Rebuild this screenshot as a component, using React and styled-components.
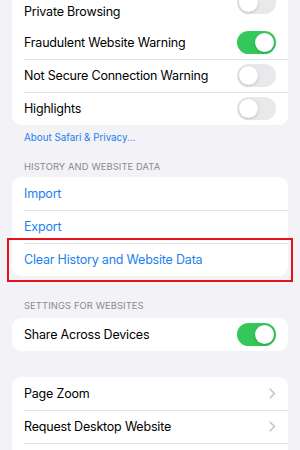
import React from "react";
import styled, { createGlobalStyle } from "styled-components";

const GlobalStyle = createGlobalStyle`
  html, body {
    margin: 0;
    padding: 0;
    background: #f2f2f7;
    overflow: hidden;
  }
  body {
    font-family: Inter, "Liberation Sans", sans-serif;
    -webkit-font-smoothing: antialiased;
  }
`;

const Page = styled.div`
  width: 300px;
  height: 450px;
  overflow: hidden;
  background: #f2f2f7;
`;

const Scroller = styled.div`
  margin-top: -26px;
  padding: 0 12px;
  display: flex;
  flex-direction: column;
`;

const Card = styled.div`
  background: #fff;
  border-radius: 9px;
  margin-top: ${(props) => props.gap || 0}px;
`;

const Row = styled.div`
  position: relative;
  display: flex;
  align-items: center;
  justify-content: space-between;
  min-height: 33px;
  padding: ${(props) => (props.tall ? "8px 12px 4px" : "0 12px")};
  box-sizing: border-box;

  & + &::before {
    content: "";
    position: absolute;
    top: 0;
    left: 12px;
    right: 0;
    height: 1px;
    background: #e3e3e8;
  }
`;

const Label = styled.span`
  font-size: 12.5px;
  line-height: 20px;
  letter-spacing: -0.2px;
  color: ${(props) => (props.link ? "#1a7ff0" : "#000")};
`;

const Switch = styled.div`
  position: relative;
  flex: none;
  align-self: center;
  width: 39px;
  height: 23px;
  border-radius: 12px;
  background: ${(props) => (props.on ? "#34c759" : "#e9e9eb")};

  &::after {
    content: "";
    position: absolute;
    top: 2px;
    left: ${(props) => (props.on ? "18px" : "2px")};
    width: 19px;
    height: 19px;
    border-radius: 50%;
    background: #fff;
    box-shadow: 0 1px 3px rgba(0, 0, 0, 0.18), 0 0 1px rgba(0, 0, 0, 0.08);
  }
`;

const FooterLink = styled.div`
  padding: 6px 12px 0;
  font-size: 9.8px;
  line-height: 14px;
  color: #1a7ff0;
`;

const SectionHeader = styled.div`
  padding: ${(props) => props.top || 0}px 12px 0;
  font-size: 9.4px;
  line-height: 14px;
  letter-spacing: 0.1px;
  color: #8a8a8e;
  text-transform: uppercase;
`;

const Highlight = styled.div`
  position: absolute;
  top: -5px;
  left: -5px;
  right: -5px;
  bottom: -6px;
  border: 2px solid #e3121b;
  pointer-events: none;
`;

const Chevron = () => (
  <svg width="7" height="11" viewBox="0 0 7 11" fill="none">
    <path
      d="M1.2 1.2L5.5 5.5L1.2 9.8"
      stroke="#c4c4c8"
      strokeWidth="1.6"
      strokeLinecap="round"
      strokeLinejoin="round"
    />
  </svg>
);

export default function App() {
  return (
    <Page>
      <GlobalStyle />
      <Scroller>
        <Card>
          <Row tall>
            <Label>
              Require Face ID to Unlock
              <br />
              Private Browsing
            </Label>
            <Switch />
          </Row>
          <Row>
            <Label>Fraudulent Website Warning</Label>
            <Switch on />
          </Row>
          <Row>
            <Label>Not Secure Connection Warning</Label>
            <Switch />
          </Row>
          <Row>
            <Label>Highlights</Label>
            <Switch />
          </Row>
        </Card>
        <FooterLink>About Safari &amp; Privacy...</FooterLink>

        <SectionHeader top={15}>History and Website Data</SectionHeader>
        <Card gap={3}>
          <Row>
            <Label link>Import</Label>
          </Row>
          <Row>
            <Label link>Export</Label>
          </Row>
          <Row>
            <Label link>Clear History and Website Data</Label>
            <Highlight />
          </Row>
        </Card>

        <SectionHeader top={23}>Settings for Websites</SectionHeader>
        <Card gap={5}>
          <Row>
            <Label>Share Across Devices</Label>
            <Switch on />
          </Row>
        </Card>

        <Card gap={26}>
          <Row>
            <Label>Page Zoom</Label>
            <Chevron />
          </Row>
          <Row>
            <Label>Request Desktop Website</Label>
            <Chevron />
          </Row>
          <Row>
            <Label>Reader</Label>
            <Chevron />
          </Row>
        </Card>
      </Scroller>
    </Page>
  );
}
